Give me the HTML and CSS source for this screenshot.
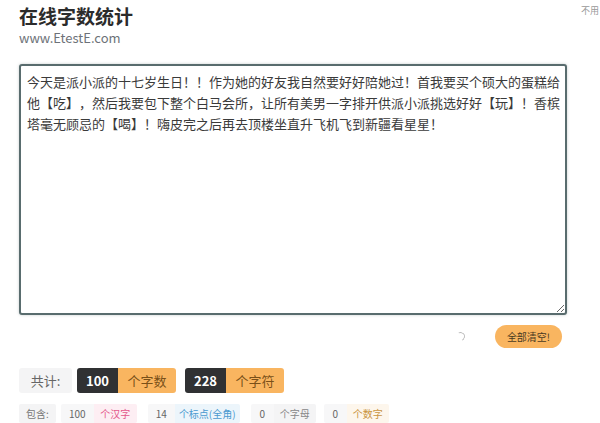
FILE: index.html
```html
<!doctype html>
<html lang="zh-CN">
<head>
<meta charset="utf-8">
<title>在线字数统计</title>
<link rel="stylesheet" href="styles.css">
</head>
<body>
<div class="page">
	<div class="side-note">不用</div>
	<div class="header">
		<h1>在线字数统计</h1>
		<div class="site">www.EtestE.com</div>
	</div>
	<textarea class="input-box" spellcheck="false">今天是派小派的十七岁生日！！作为她的好友我自然要好好陪她过！首我要买个硕大的蛋糕给他【吃】，然后我要包下整个白马会所，让所有美男一字排开供派小派挑选好好【玩】！香槟塔毫无顾忌的【喝】！嗨皮完之后再去顶楼坐直升飞机飞到新疆看星星！</textarea>
	<div class="actions">
		<span class="spinner"></span>
		<button class="clear-btn">全部清空!</button>
	</div>
	<div class="total-row">
		<span class="tag tag-label">共计:</span>
		<span class="pair">
			<span class="tag tag-dark">100</span><span class="tag tag-orange">个字数</span>
		</span>
		<span class="pair">
			<span class="tag tag-dark">228</span><span class="tag tag-orange">个字符</span>
		</span>
	</div>
	<div class="detail-row">
		<span class="mini mini-label">包含:</span>
		<span class="pair">
			<span class="mini mini-num">100</span><span class="mini mini-pink">个汉字</span>
		</span>
		<span class="pair">
			<span class="mini mini-num">14</span><span class="mini mini-blue">个标点(全角)</span>
		</span>
		<span class="pair">
			<span class="mini mini-num">0</span><span class="mini mini-gray">个字母</span>
		</span>
		<span class="pair">
			<span class="mini mini-num">0</span><span class="mini mini-yellow">个数字</span>
		</span>
	</div>
</div>
</body>
</html>
```
FILE: styles.css
```css
html, body {
	margin: 0;
	background: #fff;
	font-family: "Microsoft YaHei", "Noto Sans CJK SC", "Noto Sans", sans-serif;
	color: #333;
	overflow: hidden;
}
.page {
	position: relative;
	width: 600px;
	height: 423px;
	padding: 0 0 0 19px;
	box-sizing: border-box;
}
.side-note {
	position: absolute;
	top: 4px;
	right: 1px;
	font-size: 9px;
	color: #999;
}
.header {
	padding-top: 5px;
	height: 60px;
	box-sizing: border-box;
}
.header h1 {
	margin: 0;
	font-size: 19px;
	line-height: 22px;
	font-weight: bold;
	color: #2b2b2b;
}
.site {
	font-size: 13px;
	line-height: 16px;
	color: #6d7278;
	margin-top: 3px;
}
.input-box {
	display: block;
	width: 548px;
	height: 251px;
	margin: 4px 0 0;
	box-sizing: border-box;
	border: 2px solid #596c6e;
	border-radius: 3px;
	box-shadow: 0 0 3px rgba(90, 110, 110, 0.35);
	padding: 5px 3px 5px 6px;
	font-family: "Microsoft YaHei", "Noto Sans CJK SC", sans-serif;
	font-size: 13px;
	line-height: 21px;
	color: #3a3a3a;
	text-spacing-trim: space-all;
	resize: both;
	outline: none;
}
.actions {
	display: flex;
	justify-content: flex-end;
	align-items: center;
	gap: 30px;
	width: 543px;
	margin-top: 10px;
	height: 23px;
}
.spinner {
	width: 7px;
	height: 7px;
	border: 1px solid transparent;
	border-top-color: #bbb;
	border-right-color: #bbb;
	border-radius: 50%;
	transform: rotate(20deg);
}
.clear-btn {
	height: 23px;
	width: 67px;
	padding: 0;
	border: none;
	border-radius: 12px;
	background: #f9b560;
	color: #4a3a22;
	font-family: "Microsoft YaHei", "Noto Sans CJK SC", sans-serif;
	font-size: 10px;
}
.total-row {
	display: flex;
	gap: 9px;
	margin-top: 20px;
	height: 25px;
}
.pair {
	display: flex;
}
.tag {
	display: flex;
	align-items: center;
	justify-content: center;
	height: 25px;
	font-size: 13px;
}
.tag-label {
	width: 53px;
	background: #f4f4f5;
	color: #666;
	border-radius: 3px;
	margin-right: -4px;
}
.tag-dark {
	width: 41px;
	background: #303133;
	color: #fff;
	font-weight: bold;
	border-radius: 3px 0 0 3px;
}
.tag-orange {
	width: 58px;
	background: #f9b560;
	color: #7a5018;
	border-radius: 0 3px 3px 0;
}
.detail-row {
	display: flex;
	gap: 11px;
	margin-top: 11px;
	height: 19px;
}
.detail-row .pair:last-child {
	margin-left: -3px;
}
.mini {
	display: flex;
	align-items: center;
	justify-content: center;
	box-sizing: border-box;
	height: 19px;
	font-size: 10px;
}
.mini-label {
	width: 37px;
	background: #f4f4f5;
	color: #777;
	border-radius: 2px;
	margin-right: -6px;
}
.mini-num {
	min-width: 23px;
	padding: 0 8px;
	background: #f7f7f8;
	color: #666;
	border-radius: 2px 0 0 2px;
}
.mini-pink {
	width: 43px;
	background: #fdeef3;
	color: #e4578b;
	border-radius: 0 2px 2px 0;
}
.mini-blue {
	width: 65px;
	background: #ecf5fb;
	color: #4a9ad0;
	border-radius: 0 2px 2px 0;
}
.mini-gray {
	width: 42px;
	background: #f4f4f5;
	color: #888;
	border-radius: 0 2px 2px 0;
}
.mini-yellow {
	width: 42px;
	background: #fdf6ec;
	color: #c99440;
	border-radius: 0 2px 2px 0;
}
```
